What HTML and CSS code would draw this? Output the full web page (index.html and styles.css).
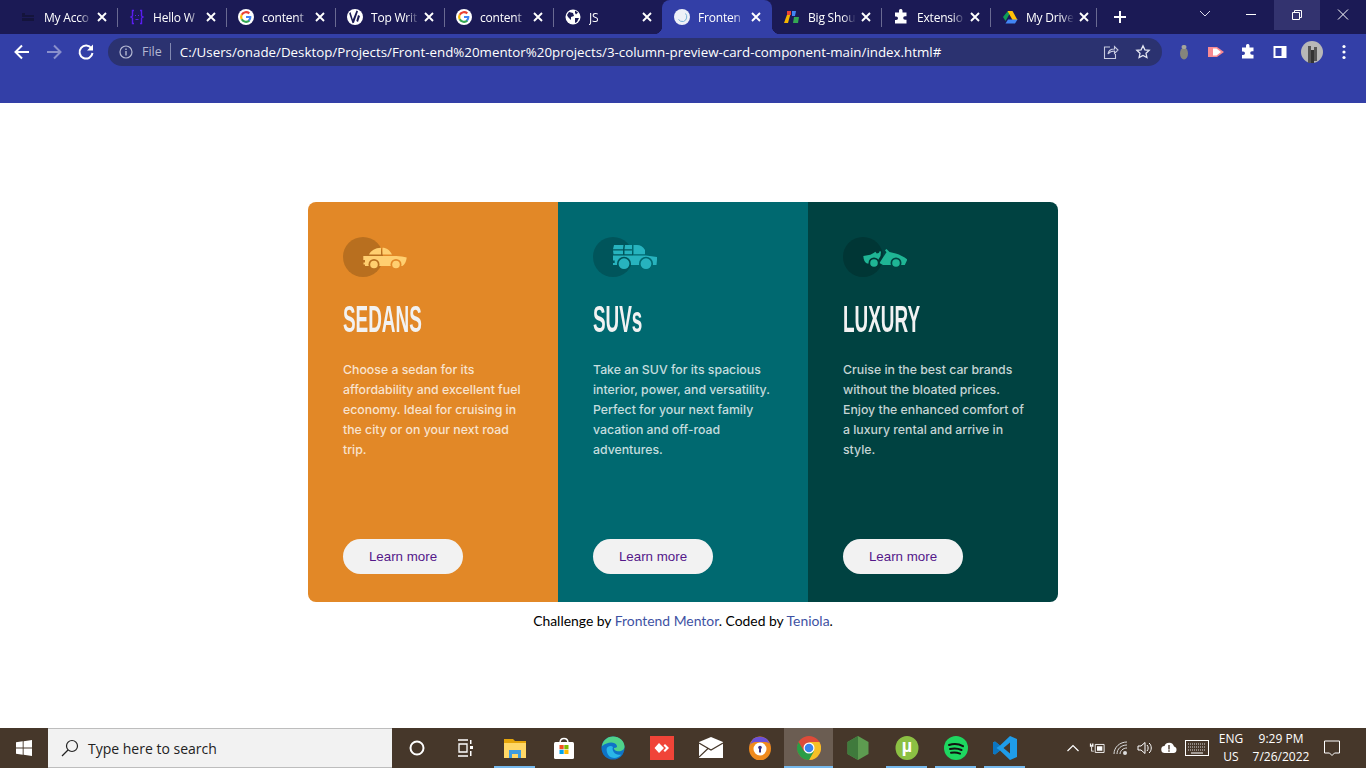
FILE: index.html
```html
<!DOCTYPE html>
<html lang="en">
<head>
<meta charset="utf-8">
<title>3-column preview card</title>
<link rel="stylesheet" href="styles.css">
</head>
<body>
<svg class="defs" aria-hidden="true"><symbol id="x" viewBox="0 0 10 10"><path fill="none" stroke="#fff" stroke-width="1.900" d="M1 1l8 8M9 1L1 9"/></symbol></svg>
<header class="chrome">
  <div class="tabstrip">
    <div class="tab"><svg class="fav" viewBox="0 0 16 16"><path fill="#14143c" d="M2 4h3v2h9v2H2zM2 9h12v3H2z"/></svg><span class="title">My Acco</span><svg class="close"><use href="#x"/></svg></div>
    <div class="tab sep"><svg class="fav" viewBox="0 0 16 16"><path fill="none" stroke="#5a1df0" stroke-width="1.400" d="M5 1.500H3.500V7L2 8l1.500 1v5.500H5M11 1.500h1.500V7L14 8l-1.500 1v5.500H11"/><path fill="#5a1df0" d="M6 6h1v1H6zM9 6h1v1H9zM6.500 10h3v1h-3z"/></svg><span class="title">Hello W</span><svg class="close"><use href="#x"/></svg></div>
    <div class="tab sep"><svg class="fav" viewBox="0 0 16 16"><circle cx="8" cy="8" r="8" fill="#fff"/><path fill="none" stroke="#ea4335" stroke-width="2.200" d="M3.700 5.700A5 5 0 0 1 11.300 4.400"/><path fill="none" stroke="#fbbc05" stroke-width="2.200" d="M3.700 5.700a5 5 0 0 0 0 4.600"/><path fill="none" stroke="#34a853" stroke-width="2.200" d="M3.700 10.300a5 5 0 0 0 7.600 1.300"/><path fill="#4285f4" d="M8 7h5.300c.3 2-.4 4-1.800 5.200L10 10.800c.6-.5 1-1 1.100-1.800H8z"/></svg><span class="title">content</span><svg class="close"><use href="#x"/></svg></div>
    <div class="tab sep"><svg class="fav" viewBox="0 0 16 16"><circle cx="8" cy="8" r="8" fill="#fff"/><path fill="#1b1a55" d="M3.500 3l2.300 7.500L9.500 1.500l1.500.7-4 11.500-1.500.5L2.200 4.500zM11 6l2 1-2 6-1.700-1z"/></svg><span class="title">Top Writ</span><svg class="close"><use href="#x"/></svg></div>
    <div class="tab sep"><svg class="fav" viewBox="0 0 16 16"><circle cx="8" cy="8" r="8" fill="#fff"/><path fill="none" stroke="#ea4335" stroke-width="2.200" d="M3.700 5.700A5 5 0 0 1 11.300 4.400"/><path fill="none" stroke="#fbbc05" stroke-width="2.200" d="M3.700 5.700a5 5 0 0 0 0 4.600"/><path fill="none" stroke="#34a853" stroke-width="2.200" d="M3.700 10.300a5 5 0 0 0 7.600 1.300"/><path fill="#4285f4" d="M8 7h5.300c.3 2-.4 4-1.800 5.200L10 10.800c.6-.5 1-1 1.100-1.800H8z"/></svg><span class="title">content</span><svg class="close"><use href="#x"/></svg></div>
    <div class="tab sep"><svg class="fav" viewBox="0 0 16 16"><circle cx="8" cy="8" r="7.500" fill="#fff"/><path fill="#1b1a55" d="M4 3l4 1 1 3-3 1v3L3 8 2 6zM10 1.500l3 2-2 2-1-1.500zM10 9l4 0-2 4-2 1z"/></svg><span class="title">JS</span><svg class="close"><use href="#x"/></svg></div>
    <div class="tab active"><svg class="fav" viewBox="0 0 16 16"><circle cx="8" cy="8" r="8" fill="#eef1f8"/><path fill="none" stroke="#7bb4d8" stroke-width="1" d="M11.500 4.500a5 5 0 0 1-2 8 5 5 0 0 1-5-2"/></svg><span class="title">Fronten</span><svg class="close"><use href="#x"/></svg></div>
    <div class="tab"><svg class="fav" viewBox="0 0 16 16"><path fill="#f4b400" d="M0 14l4-11h3l-3 11z"/><path fill="#ea4335" d="M3 2h4v4H3z"/><path fill="#4285f4" d="M8 2h4l-1 5H8z"/><path fill="#34a853" d="M10 8h5l-1 6h-5z"/></svg><span class="title">Big Shou</span><svg class="close"><use href="#x"/></svg></div>
    <div class="tab sep"><svg class="fav" viewBox="0 0 16 16"><path fill="#fff" d="M6 1.500a1.800 1.800 0 0 1 3.500 0V3.500h4v3.700h-1.500a1.800 1.800 0 0 0 0 3.600h1.500v3.700H2V11h1.200a1.800 1.800 0 0 0 0-3.600H2V3.500h4z"/></svg><span class="title">Extensio</span><svg class="close"><use href="#x"/></svg></div>
    <div class="tab sep last"><svg class="fav" viewBox="0 0 16 16"><path fill="#0f9d58" d="M5.500 1.500h3.500L3.500 11 1 7z" transform="translate(0 1)"/><path fill="#ffc107" d="M5.500 2h5l5 9h-5z"/><path fill="#4285f4" d="M3.500 14.500l2.500-4h9.500l-2.500 4z"/></svg><span class="title">My Drive</span><svg class="close"><use href="#x"/></svg></div>
    <svg class="newtab" viewBox="0 0 14 14"><path stroke="#fff" stroke-width="2" d="M7 1v12M1 7h12"/></svg>
    <div class="winctl">
      <svg class="wbtn" viewBox="0 0 46 30"><path fill="none" stroke="#dcdcec" d="M18 11l5 5 5-5"/></svg>
      <svg class="wbtn" viewBox="0 0 46 30"><path stroke="#fff" d="M18 14.500h10"/></svg>
      <svg class="wbtn maxed" viewBox="0 0 46 30"><path fill="none" stroke="#fff" d="M18.500 12.500h7v7h-7zM20.500 12.500v-2h7v7h-2"/></svg>
      <svg class="wbtn" viewBox="0 0 46 30"><path stroke="#fff" d="M18 9.500l10 10M28 9.500l-10 10"/></svg>
    </div>
  </div>
  <div class="toolbar">
    <svg class="navbtn" viewBox="0 0 20 20"><path fill="none" stroke="#fff" stroke-width="2" d="M17 10H4M10 3.500L3.500 10l6.500 6.500"/></svg>
    <svg class="navbtn" viewBox="0 0 20 20"><path fill="none" stroke="#8a90cc" stroke-width="2" d="M3 10h13M10 3.500l6.500 6.500-6.500 6.500"/></svg>
    <svg class="navbtn" viewBox="0 0 20 20"><path fill="none" stroke="#fff" stroke-width="2" d="M15.500 6.500A6.500 6.500 0 1 0 16.500 11"/><path fill="#fff" d="M17 2.500v6h-6z"/></svg>
    <div class="omnibox">
      <svg class="info" viewBox="0 0 14 14"><circle cx="7" cy="7" r="6" fill="none" stroke="#b4b8d2" stroke-width="1.200"/><path fill="#b4b8d2" d="M6.300 6h1.400v4.500H6.300zM6.300 3.500h1.400v1.400H6.300z"/></svg>
      <span class="scheme">File</span>
      <span class="url">C:/Users/onade/Desktop/Projects/Front-end%20mentor%20projects/3-column-preview-card-component-main/index.html#</span>
      <svg class="omni-ic share" viewBox="0 0 16 16"><path fill="none" stroke="#c8cbe0" stroke-width="1.100" d="M7 3H1.500v11.500h11V10M5 10c.5-3.500 3-5 6.500-5V2.500L15 6l-3.500 3.500V7c-3 0-5 1-6.500 3z"/></svg>
      <svg class="omni-ic" viewBox="0 0 16 16"><path fill="none" stroke="#e4e6f2" stroke-width="1.300" d="M8 1.800l1.900 4 4.300.5-3.200 3 .9 4.300L8 11.400l-3.900 2.200.9-4.300-3.200-3 4.300-.5z"/></svg>
    </div>
    <div class="extensions">
      <svg class="ext" viewBox="0 0 16 16"><ellipse cx="8" cy="9.500" rx="4" ry="6" fill="#85857c"/><rect x="5.500" y="1" width="5" height="4" rx="2" fill="#a5a59c"/></svg>
      <svg class="ext" viewBox="0 0 16 16"><path fill="#f98a92" d="M0 3h9l7 5-7 5H0z"/><path fill="#fff" d="M5 4.500h3.500L13 8l-4.500 3.500H5z"/></svg>
      <svg class="ext" viewBox="0 0 16 16"><path fill="#fff" d="M6 1.500a1.800 1.800 0 0 1 3.500 0V3.500h4v3.700h-1.500a1.800 1.800 0 0 0 0 3.600h1.500v3.700H2V11h1.200a1.800 1.800 0 0 0 0-3.600H2V3.500h4z"/></svg>
      <svg class="ext" viewBox="0 0 16 16"><path fill="#fff" d="M1.500 2h13v12h-13zM9.500 4H3.500v8h6z"/></svg>
      <svg class="ext avatar" viewBox="0 0 22 22"><circle cx="11" cy="11" r="11" fill="#b8b8b8"/><path fill="#555" d="M7 5h3v17H7zM13 6h3v14h-3z"/><path fill="#333" d="M10 9h3v13h-3z"/></svg>
      <svg class="ext" viewBox="0 0 16 16"><circle cx="8" cy="2.500" r="1.600" fill="#fff"/><circle cx="8" cy="8" r="1.600" fill="#fff"/><circle cx="8" cy="13.500" r="1.600" fill="#fff"/></svg>
    </div>
  </div>
</header>

<main class="page">
  <div class="cards">
    <article class="card sedans">
      <svg class="car" viewBox="0 0 64 40">
        <mask id="m1"><rect width="64" height="40" fill="#fff"/><circle cx="31" cy="27.500" r="5.500" fill="#000"/><circle cx="53" cy="27.500" r="5.500" fill="#000"/></mask>
        <circle class="disc" cx="20" cy="20" r="20"/>
        <g class="carfill" mask="url(#m1)"><path d="M26 17.500c2-4 6-6.700 12-6.800v6.800zM39.500 10.700c4 0 7.500 2.500 9.500 6.800h-9.500zM20.300 19h33c4 .3 7.500.8 10.400 1.500-.3 3.500-2 7.500-4.500 8.500H22v-1.500h-1.500v-2H22v-2.500h-1.700z"/></g>
        <circle class="carfill" cx="31" cy="27.500" r="3.800"/><circle class="carfill" cx="53" cy="27.500" r="3.800"/>
      </svg>
      <h2>SEDANS</h2>
      <p>Choose a sedan for its affordability and excellent fuel economy. Ideal for cruising in the city or on your next road trip.</p>
      <a class="btn" href="#">Learn more</a>
    </article>
    <article class="card suvs">
      <svg class="car" viewBox="0 0 64 40">
        <mask id="m2"><rect width="64" height="40" fill="#fff"/><circle cx="31" cy="26.700" r="7" fill="#000"/><circle cx="53" cy="26.700" r="7" fill="#000"/></mask>
        <circle class="disc" cx="20" cy="20" r="20"/>
        <g class="carfill" mask="url(#m2)"><path d="M21 8h9.500l-.5 4.200h-10zM32 8h7v4.200h-7.500zM40.500 8H44c3.500 0 6 1.700 8 5v4.300H40.500zM20 13.500h10v3.800h-9.500zM31.500 13.500h7.500v3.800h-7.500zM20 18.500h33l11.300 1.500-.8 8H20v-2h1.700v-2.500H20z"/></g>
        <circle class="carfill" cx="31" cy="26.700" r="5.400"/><circle class="carfill" cx="53" cy="26.700" r="5.400"/>
      </svg>
      <h2>SUVs</h2>
      <p>Take an SUV for its spacious interior, power, and versatility. Perfect for your next family vacation and off-road adventures.</p>
      <a class="btn" href="#">Learn more</a>
    </article>
    <article class="card luxury">
      <svg class="car" viewBox="0 0 64 40">
        <mask id="m3"><rect width="64" height="40" fill="#fff"/><circle cx="31" cy="26" r="5.500" fill="#000"/><circle cx="53" cy="26" r="5.500" fill="#000"/></mask>
        <circle class="disc" cx="20" cy="20" r="20"/>
        <g class="carfill" mask="url(#m3)"><path d="M20.300 19l7-1.300c2-1.200 4-2 5-3l1.500 1.800c1.500 0 2.500-1 2.800-2.300l1.400.3-.5 4.500-3 5-1 2.500H24c-2-1-3.500-3.500-3.700-7.500z"/><path d="M43.500 12l3 3c6 1.200 12.500 3 17.800 7.500l-2.500 5.500H40l-3.500-2 3.500-5.500 3.500-5.200-1.500-2z"/></g>
        <circle class="carfill" cx="31" cy="26" r="3.800"/><circle class="carfill" cx="53" cy="26" r="3.800"/>
      </svg>
      <h2>LUXURY</h2>
      <p>Cruise in the best car brands without the bloated prices. Enjoy the enhanced comfort of a luxury rental and arrive in style.</p>
      <a class="btn" href="#">Learn more</a>
    </article>
  </div>
  <p class="attribution">Challenge by <a href="#">Frontend Mentor</a>. Coded by <a href="#">Teniola</a>.</p>
</main>

<footer class="taskbar">
  <svg class="winlogo" viewBox="0 0 16 16"><path fill="#fff" d="M0 2.300l6.700-1v6.200H0zM7.600 1.200L16 0v7.500H7.600zM0 8.400h6.700v6.300L0 13.700zM7.600 8.400H16V16l-8.400-1.200z"/></svg>
  <div class="search">
    <svg class="lens" viewBox="0 0 18 18"><circle cx="11" cy="7" r="5.500" fill="none" stroke="#222" stroke-width="1.200"/><path stroke="#222" stroke-width="1.300" d="M7 11l-6 6"/></svg>
    <span>Type here to search</span>
  </div>
  <div class="apps">
    <div class="app"><svg viewBox="0 0 24 24"><circle cx="12" cy="12" r="6.500" fill="none" stroke="#fff" stroke-width="2"/></svg></div>
    <div class="app"><svg viewBox="0 0 24 24"><path fill="none" stroke="#fff" stroke-width="1.300" d="M4 4h10M4 20h10M5 8h8v8H5z"/><path fill="#fff" d="M16 4h1.500v4H16zM16 10h3v3h-3zM16 15h1.500v5H16z"/></svg></div>
    <div class="app on"><svg viewBox="0 0 24 24"><path fill="#e5a50a" d="M1 3h9l2 2h11v2H1z"/><path fill="#ffd766" d="M1 7h22v15H1z"/><path fill="#3d9be0" d="M6 14h12v8h-3v-4H9v4H6z"/></svg></div>
    <div class="app"><svg viewBox="0 0 24 24"><path fill="none" stroke="#fff" stroke-width="1.500" d="M8 7c0-6 8-6 8 0"/><rect x="2" y="6" width="20" height="17" rx="1.500" fill="#fff"/><path fill="#f25022" d="M7.500 9h4.200v4.200H7.500z"/><path fill="#7fba00" d="M12.300 9h4.200v4.200h-4.200z"/><path fill="#00a4ef" d="M7.500 13.800h4.200V18H7.500z"/><path fill="#ffb900" d="M12.300 13.800h4.200V18h-4.200z"/></svg></div>
    <div class="app"><svg viewBox="0 0 26 26"><circle cx="13" cy="13" r="12.500" fill="#0f73c6"/><path fill="#4fd38a" d="M1 11C2 4 8 .5 13 .5c7 0 12.500 5 12.500 11 0 4-4 5.500-7.500 5-3-.5-4-2-4-3.500 3 0 4-1 3-3-2-4-10-4-16 1z"/><path fill="#2ab6e8" d="M6 14c1-3 5-4 7-2-2 4 3 10 9 8-3 4-9 5-13 2-2-2-3-5-3-8z"/></svg></div>
    <div class="app"><svg viewBox="0 0 24 24"><rect width="24" height="24" fill="#f04438"/><path fill="#fff" d="M9 7l5 5-5 5-4.500-5zM15 8l4 4-4 4-1.500-1.500L16 12l-2.500-2.500z"/></svg></div>
    <div class="app"><svg viewBox="0 0 24 24"><path fill="#fff" d="M0 6l12-5 12 5v16H0z"/><path fill="none" stroke="#46372a" stroke-width="1.200" d="M0 7l12 7 12-7M0 21l9-8.500"/></svg></div>
    <div class="app"><svg viewBox="0 0 24 24"><ellipse cx="12" cy="12.500" rx="11" ry="12" fill="#f08a1d"/><path fill="#6b50d8" d="M5 3c4-3 10-3 14 0l4 7c-1-3-3-4-6-4H8C5 6 3 7 1 10z"/><circle cx="12" cy="13" r="6.500" fill="#fff"/><circle cx="12" cy="11.500" r="1.800" fill="#3c3180"/><path fill="#3c3180" d="M11 12h2v4.500h-2z"/></svg></div>
    <div class="app current"><svg viewBox="0 0 24 24"><circle cx="12" cy="12" r="12" fill="#dd4b39"/><path fill="#f6c026" d="M12 24a12 12 0 0 0 10.400-18H12l5 6z"/><path fill="#2b9d46" d="M1.600 6A12 12 0 0 0 12 24l5-8.700H7z"/><circle cx="12" cy="12" r="5.500" fill="#fff"/><circle cx="12" cy="12" r="4.300" fill="#3a83ee"/></svg></div>
    <div class="app"><svg viewBox="0 0 24 24"><path fill="#5d9b50" d="M12 0l10.500 6v12L12 24 1.500 18V6z"/><path fill="#3f7a3c" d="M12 0v24L1.500 18V6z"/></svg></div>
    <div class="app on"><svg viewBox="0 0 24 24"><ellipse cx="12" cy="12" rx="11.500" ry="12" fill="#8cc043"/><text class="mu" x="12" y="16" text-anchor="middle">µ</text></svg></div>
    <div class="app on"><svg viewBox="0 0 24 24"><circle cx="12" cy="12" r="12" fill="#1ed760"/><path fill="none" stroke="#111" stroke-width="2" stroke-linecap="round" d="M5 9c5-1.500 10-1 14 1.200M6 13c4-1 8-.7 11.500 1M7 16.800c3-.7 6-.5 9 .9"/></svg></div>
    <div class="app on"><svg viewBox="0 0 24 24"><path fill="#1f9ce8" d="M17 0l7 3v18l-7 3L7 14.500 2 18.500 0 17.500v-11l2-1 5 4zM17 6.500L10.500 12l6.500 5.500z"/><path fill="#0c75c0" d="M0 6.500l2-1 5 4-3.500 2.500L7 14.500 2 18.500 0 17.500z"/></svg></div>
  </div>
  <div class="tray">
    <svg class="tr chev" viewBox="0 0 14 14"><path fill="none" stroke="#fff" stroke-width="1.200" d="M1.500 10L7 4.500l5.500 5.500"/></svg>
    <svg class="tr" viewBox="0 0 18 14"><path fill="none" stroke="#fff" d="M7 3h10v9H7z"/><path fill="#fff" d="M9 5h6v5H9zM1 2h1.500v2h1V2H5v3.500H1zM2.500 6h1v4h2v1h-3z"/></svg>
    <svg class="tr" viewBox="0 0 16 16"><path fill="none" stroke="#ddd" d="M1 14C1 7 7 2 14 2M4 14c0-5 4-9 10-9M7 14c0-3 3-6 7-6"/><circle cx="12" cy="13" r="2" fill="#ddd"/></svg>
    <svg class="tr" viewBox="0 0 16 16"><path fill="none" stroke="#fff" d="M1 6h3l4-3.500v11L4 10H1zM10 5c1.500 1.500 1.500 4.500 0 6M12 3c3 2.500 3 7.500 0 10"/></svg>
    <svg class="tr" viewBox="0 0 16 16"><path fill="#fff" d="M4 13a3.500 3.500 0 0 1-.5-7A5 5 0 0 1 13 6.500 3.300 3.300 0 0 1 12.500 13z"/><path fill="#46372a" d="M7.300 5h1.400v4.500H7.300zM7.300 10.300h1.400v1.400H7.300z"/></svg>
    <svg class="tr kbd" viewBox="0 0 24 16"><rect x=".5" y=".5" width="23" height="15" fill="none" stroke="#fff"/><path fill="none" stroke="#ddd" stroke-dasharray="1 1" d="M3 4h18M3 7h18M3 10h18"/><path stroke="#fff" d="M6 13h12"/></svg>
    <div class="lang"><span>ENG</span><span>US</span></div>
    <div class="clock"><span>9:29 PM</span><span>7/26/2022</span></div>
    <svg class="notif" viewBox="0 0 18 18"><path fill="none" stroke="#fff" d="M1.500 2h15v12h-5l-2.500 2.500L6.500 14h-5z"/></svg>
  </div>
</footer>
</body>
</html>
```
FILE: styles.css
```css
* { box-sizing: border-box; }
html, body { margin: 0; height: 100%; }
body {
  width: 1366px;
  height: 768px;
  overflow: hidden;
  display: flex;
  flex-direction: column;
  background: #fff;
  font-family: "Open Sans", sans-serif;
}
.defs { display: none; }

/* browser chrome */
.chrome { background: #333fa7; height: 103px; flex: none; }
.tabstrip {
  height: 34px;
  background: #1b1a55;
  display: flex;
  padding-left: 8px;
  color: #fff;
}
.tab {
  width: 109px;
  height: 34px;
  display: flex;
  align-items: center;
  padding-left: 12px;
  position: relative;
  font-size: 12px;
  flex: none;
}
.tab.sep::before {
  content: "";
  position: absolute;
  left: 0;
  top: 8px;
  width: 1px;
  height: 19px;
  background: #6a6a92;
}
.tab.last::after {
  content: "";
  position: absolute;
  right: 2px;
  top: 8px;
  width: 1px;
  height: 19px;
  background: #6a6a92;
}
.tab.active {
  background: #333fa7;
  border-radius: 8px 8px 0 0;
  width: 110px;
}
.tab.active::before, .tab.active::after {
  content: "";
  position: absolute;
  bottom: 0;
  width: 8px;
  height: 8px;
  background: radial-gradient(circle at 0 0, #1b1a55 8px, #333fa7 8.500px);
}
.tab.active::before { left: -8px; }
.tab.active::after { right: -8px; background: radial-gradient(circle at 100% 0, #1b1a55 8px, #333fa7 8.500px); }
.fav { width: 16px; height: 16px; flex: none; }
.title {
  margin-left: 8px;
  width: 50px;
  flex: none;
  white-space: nowrap;
  letter-spacing: -.2px;
  -webkit-mask-image: linear-gradient(90deg, #000 70%, transparent 96%);
  mask-image: linear-gradient(90deg, #000 70%, transparent 96%);
}
.close { margin-left: 3px; width: 10px; height: 10px; flex: none; display: block; }
.newtab { width: 14px; height: 14px; margin: 10px 0 0 14px; flex: none; }
.winctl { margin-left: auto; display: flex; height: 30px; }
.wbtn { width: 46px; height: 30px; display: block; }
.wbtn.maxed { background: #33336f; }

.toolbar {
  height: 33px;
  display: flex;
  align-items: center;
  padding: 2px 0 0 12px;
}
.navbtn { width: 20px; height: 20px; margin-right: 12px; flex: none; }
.omnibox {
  width: 1054px;
  height: 28px;
  border-radius: 14px;
  background: #2b3270;
  display: flex;
  align-items: center;
  padding-left: 11px;
  flex: none;
}
.info { width: 14px; height: 14px; flex: none; }
.scheme {
  margin-left: 9px;
  padding-right: 8px;
  border-right: 1px solid #8288b0;
  color: #b4b8d2;
  font-size: 12.500px;
  line-height: 17px;
}
.url {
  margin-left: 9px;
  color: #fff;
  font-size: 13.330px;
  white-space: nowrap;
  width: 923px;
  flex: none;
}
.omni-ic { width: 16px; height: 16px; margin-left: 16px; flex: none; }
.share { margin-left: 0; }
.extensions { display: flex; align-items: center; margin-left: 14px; gap: 16px; }
.ext { width: 16px; height: 16px; flex: none; display: block; }
.avatar { width: 22px; height: 22px; margin: 0 -3px; }

/* page */
.page {
  flex: 1;
  min-height: 0;
  padding-top: 99px;
  display: flex;
  flex-direction: column;
  align-items: center;
}
.cards {
  width: 750px;
  height: 400px;
  display: flex;
  border-radius: 8px;
  overflow: hidden;
  flex: none;
}
.card {
  width: 250px;
  padding: 35px;
  display: flex;
  flex-direction: column;
  align-items: flex-start;
}
.car { width: 64px; height: 40px; display: block; flex: none; }
.sedans { background: #e28827; }
.suvs { background: #006970; }
.luxury { background: #004241; }
.sedans .disc { fill: #b86f1f; }
.suvs .disc { fill: #00555b; }
.luxury .disc { fill: #003635; }
.sedans .carfill { fill: #ffcf70; }
.suvs .carfill { fill: #27b3be; }
.luxury .carfill { fill: #1fb595; }
.card h2 {
  margin: 26px 0 0;
  font-family: "Liberation Sans Narrow", "Liberation Sans", sans-serif;
  font-size: 36px;
  line-height: 34px;
  font-weight: 700;
  color: #f2f2f2;
  transform-origin: left center;
  transform: scaleX(.525);
}
.card p {
  margin: 23px -6px 0 0;
  font-family: "Inter", sans-serif;
  font-size: 12.300px;
  font-weight: 500;
  line-height: 20px;
  color: rgba(255, 255, 255, .78);
}
.btn {
  margin-top: auto;
  margin-bottom: -7px;
  width: 120px;
  height: 35px;
  border-radius: 18px;
  background: #f2f2f2;
  color: #55188a;
  font-family: "Liberation Sans", sans-serif;
  font-size: 13.330px;
  line-height: 35px;
  text-align: center;
  text-decoration: none;
}
.attribution {
  margin: 10px 0 0;
  font-family: "Lato", sans-serif;
  font-size: 13.900px;
  line-height: 18px;
  color: #000;
}
.attribution a { color: #3e52a3; text-decoration: none; }

/* taskbar */
.taskbar {
  height: 40px;
  flex: none;
  background: #46372a;
  display: flex;
  align-items: stretch;
  color: #fff;
}
.winlogo { width: 16px; height: 16px; margin: 12px 16px 0 16px; flex: none; }
.search {
  width: 344px;
  background: #f2f2f2;
  border-top: 1px solid #bdbdbd;
  border-bottom: 1px solid #bdbdbd;
  display: flex;
  align-items: center;
  padding-left: 13px;
  color: #222;
  font-size: 14px;
  flex: none;
}
.lens { width: 18px; height: 18px; margin-right: 9px; flex: none; }
.apps { display: flex; flex: none; }
.app {
  width: 49px;
  display: flex;
  align-items: center;
  justify-content: center;
  border-bottom: 2px solid transparent;
  padding-top: 2px;
}
.app svg { width: 24px; height: 24px; display: block; }
.app.on { position: relative; }
.app.on::after {
  content: "";
  position: absolute;
  left: 4px;
  right: 4px;
  bottom: -2px;
  height: 2px;
  background: #76b9ed;
}
.app.current { background: #6b5d52; border-bottom-color: #76b9ed; }
.mu { fill: #fff; font: 700 18px "Liberation Sans", sans-serif; }
.tray {
  flex: 1;
  display: flex;
  align-items: center;
  padding-left: 37px;
  font-size: 12px;
}
.tr { width: 16px; height: 16px; margin-right: 8px; flex: none; }
.chev { width: 14px; height: 14px; margin-right: 9px; }
.kbd { width: 24px; margin-right: 5px; }
.lang, .clock { display: flex; flex-direction: column; align-items: center; line-height: 18px; }
.lang { width: 34px; }
.clock { width: 62px; margin-left: 2px; }
.notif { width: 18px; height: 18px; margin-left: 11px; flex: none; }
```
